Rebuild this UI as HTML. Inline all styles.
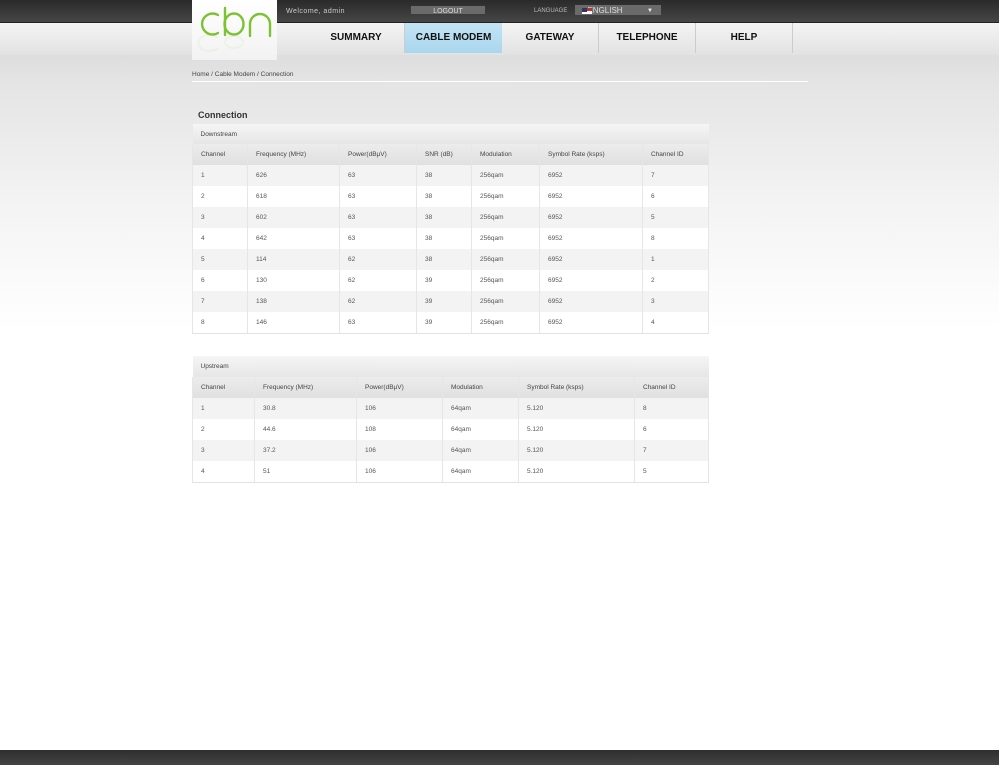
<!DOCTYPE html>
<html><head><meta charset="utf-8"><style>
*{margin:0;padding:0;box-sizing:border-box}
body{width:999px;height:765px;position:relative;overflow:hidden;font-family:"Liberation Sans",Arial,sans-serif;background:linear-gradient(#dcdcdc 50px,#e4e4e4 80px,#f3f3f3 200px,#fff 330px,#fff);}
.top{position:absolute;left:0;top:0;width:999px;height:23px;background:linear-gradient(#2a2a2a,#464646);border-bottom:1px solid #222}
.nav{position:absolute;left:0;top:23px;width:999px;height:32px;background:linear-gradient(#f4f4f4,#e2e2e2)}
.logo{position:absolute;left:192px;top:0;width:85px;height:60px;background:linear-gradient(#fff,#f2f2f2)}
.wel{position:absolute;left:286px;top:8px;font-size:7px;color:#ccc;letter-spacing:.5px}
.logout{position:absolute;left:411px;top:6px;width:74px;height:8px;background:#6a6a6a;color:#ddd;font-size:7px;text-align:center;line-height:11px}
.lang{position:absolute;left:534px;top:8px;font-size:6px;color:#bbb}
.sel{position:absolute;left:575px;top:5px;width:86px;height:10px;background:#6a6a6a;color:#ddd;font-size:8px;line-height:12px;padding-left:8px}
.sel i{position:absolute;left:7px;top:3px;width:10px;height:6px;background:linear-gradient(#b33 0 50%,#fff 50%);}
.sel i:before{content:"";position:absolute;left:0;top:0;width:5px;height:4px;background:#336}
.sel b{position:absolute;left:72px;top:0;font-size:6px;color:#eee}
.tab{position:absolute;top:23px;height:30px;line-height:30px;text-align:center;font-size:10px;font-weight:bold;color:#111;border-right:1px solid #ccc}
.tab.on{background:linear-gradient(#c3e4f4,#aad6ee);border-right:none}
.bc{position:absolute;left:192px;top:71px;font-size:6.5px;color:#444}
.hr{position:absolute;left:192px;top:81px;width:616px;height:1px;background:#fff}
h2{position:absolute;left:198px;top:110px;font-size:9px;color:#333;font-weight:bold}
table{position:absolute;left:192px;width:516px;border-collapse:collapse;font-size:6.5px;color:#555;table-layout:fixed}
td{height:21px;padding-left:8px;border:1px solid #e6e6e6;border-top:none;border-bottom:none}
tr.t td{background:linear-gradient(#f5f5f5,#e6e6e6);color:#444;border:none}
tr.h td{background:linear-gradient(#ececec,#e0e0e0);color:#444}
tr.o td{background:#f3f3f3}
tr.e td{background:#fff}
tr:last-child td{border-bottom:1px solid #e2e2e2}
.foot{position:absolute;left:0;top:750px;width:999px;height:15px;background:linear-gradient(#2e2e2e,#444)}
</style></head><body>
<div class="top"></div>
<div class="nav"></div>
<div class="logo"><svg width="85" height="60" viewBox="0 0 85 60"><g transform="translate(6,0)" fill="none" stroke="#7cc232" stroke-width="2.4" stroke-linecap="round"><path d="M20 15 A10.5 10.5 0 1 0 20 33"/><path d="M27 8 V35"/><ellipse cx="36" cy="24" rx="9.5" ry="10.5"/><path d="M52 36 V24 A10 10 0 0 1 72 24 V36"/></g><g transform="translate(6,0)" fill="none" stroke="#7cc232" stroke-width="2" opacity=".07"><path d="M20 48 A11 8 0 1 1 20 38"/><ellipse cx="36" cy="42" rx="9" ry="6"/></g></svg></div>
<div class="wel">Welcome, admin</div>
<div class="logout">LOGOUT</div>
<div class="lang">LANGUAGE</div>
<div class="sel"><i></i>&nbsp;&nbsp;ENGLISH<b>▼</b></div>
<div class="tab" style="left:308px;width:97px">SUMMARY</div>
<div class="tab on" style="left:405px;width:97px">CABLE MODEM</div>
<div class="tab" style="left:502px;width:97px">GATEWAY</div>
<div class="tab" style="left:599px;width:97px">TELEPHONE</div>
<div class="tab" style="left:696px;width:97px">HELP</div>
<div class="bc">Home / Cable Modem / Connection</div>
<div class="hr"></div>
<h2>Connection</h2>
<table style="top:124px"><colgroup><col style="width:55px"><col style="width:92px"><col style="width:77px"><col style="width:55px"><col style="width:68px"><col style="width:103px"><col style="width:66px"></colgroup>
<tr class="t"><td colspan="7" style="height:20px">Downstream</td></tr>
<tr class="h"><td>Channel</td><td>Frequency (MHz)</td><td>Power(dBµV)</td><td>SNR (dB)</td><td>Modulation</td><td>Symbol Rate (ksps)</td><td>Channel ID</td></tr>
<tr class="o"><td>1</td><td>626</td><td>63</td><td>38</td><td>256qam</td><td>6952</td><td>7</td></tr>
<tr class="e"><td>2</td><td>618</td><td>63</td><td>38</td><td>256qam</td><td>6952</td><td>6</td></tr>
<tr class="o"><td>3</td><td>602</td><td>63</td><td>38</td><td>256qam</td><td>6952</td><td>5</td></tr>
<tr class="e"><td>4</td><td>642</td><td>63</td><td>38</td><td>256qam</td><td>6952</td><td>8</td></tr>
<tr class="o"><td>5</td><td>114</td><td>62</td><td>38</td><td>256qam</td><td>6952</td><td>1</td></tr>
<tr class="e"><td>6</td><td>130</td><td>62</td><td>39</td><td>256qam</td><td>6952</td><td>2</td></tr>
<tr class="o"><td>7</td><td>138</td><td>62</td><td>39</td><td>256qam</td><td>6952</td><td>3</td></tr>
<tr class="e"><td>8</td><td>146</td><td>63</td><td>39</td><td>256qam</td><td>6952</td><td>4</td></tr>
</table>
<table style="top:356px"><colgroup><col style="width:62px"><col style="width:102px"><col style="width:86px"><col style="width:76px"><col style="width:116px"><col style="width:74px"></colgroup>
<tr class="t"><td colspan="6">Upstream</td></tr>
<tr class="h"><td>Channel</td><td>Frequency (MHz)</td><td>Power(dBµV)</td><td>Modulation</td><td>Symbol Rate (ksps)</td><td>Channel ID</td></tr>
<tr class="o"><td>1</td><td>30.8</td><td>106</td><td>64qam</td><td>5.120</td><td>8</td></tr>
<tr class="e"><td>2</td><td>44.6</td><td>108</td><td>64qam</td><td>5.120</td><td>6</td></tr>
<tr class="o"><td>3</td><td>37.2</td><td>106</td><td>64qam</td><td>5.120</td><td>7</td></tr>
<tr class="e"><td>4</td><td>51</td><td>106</td><td>64qam</td><td>5.120</td><td>5</td></tr>
</table>
<div class="foot"></div>
</body></html>
